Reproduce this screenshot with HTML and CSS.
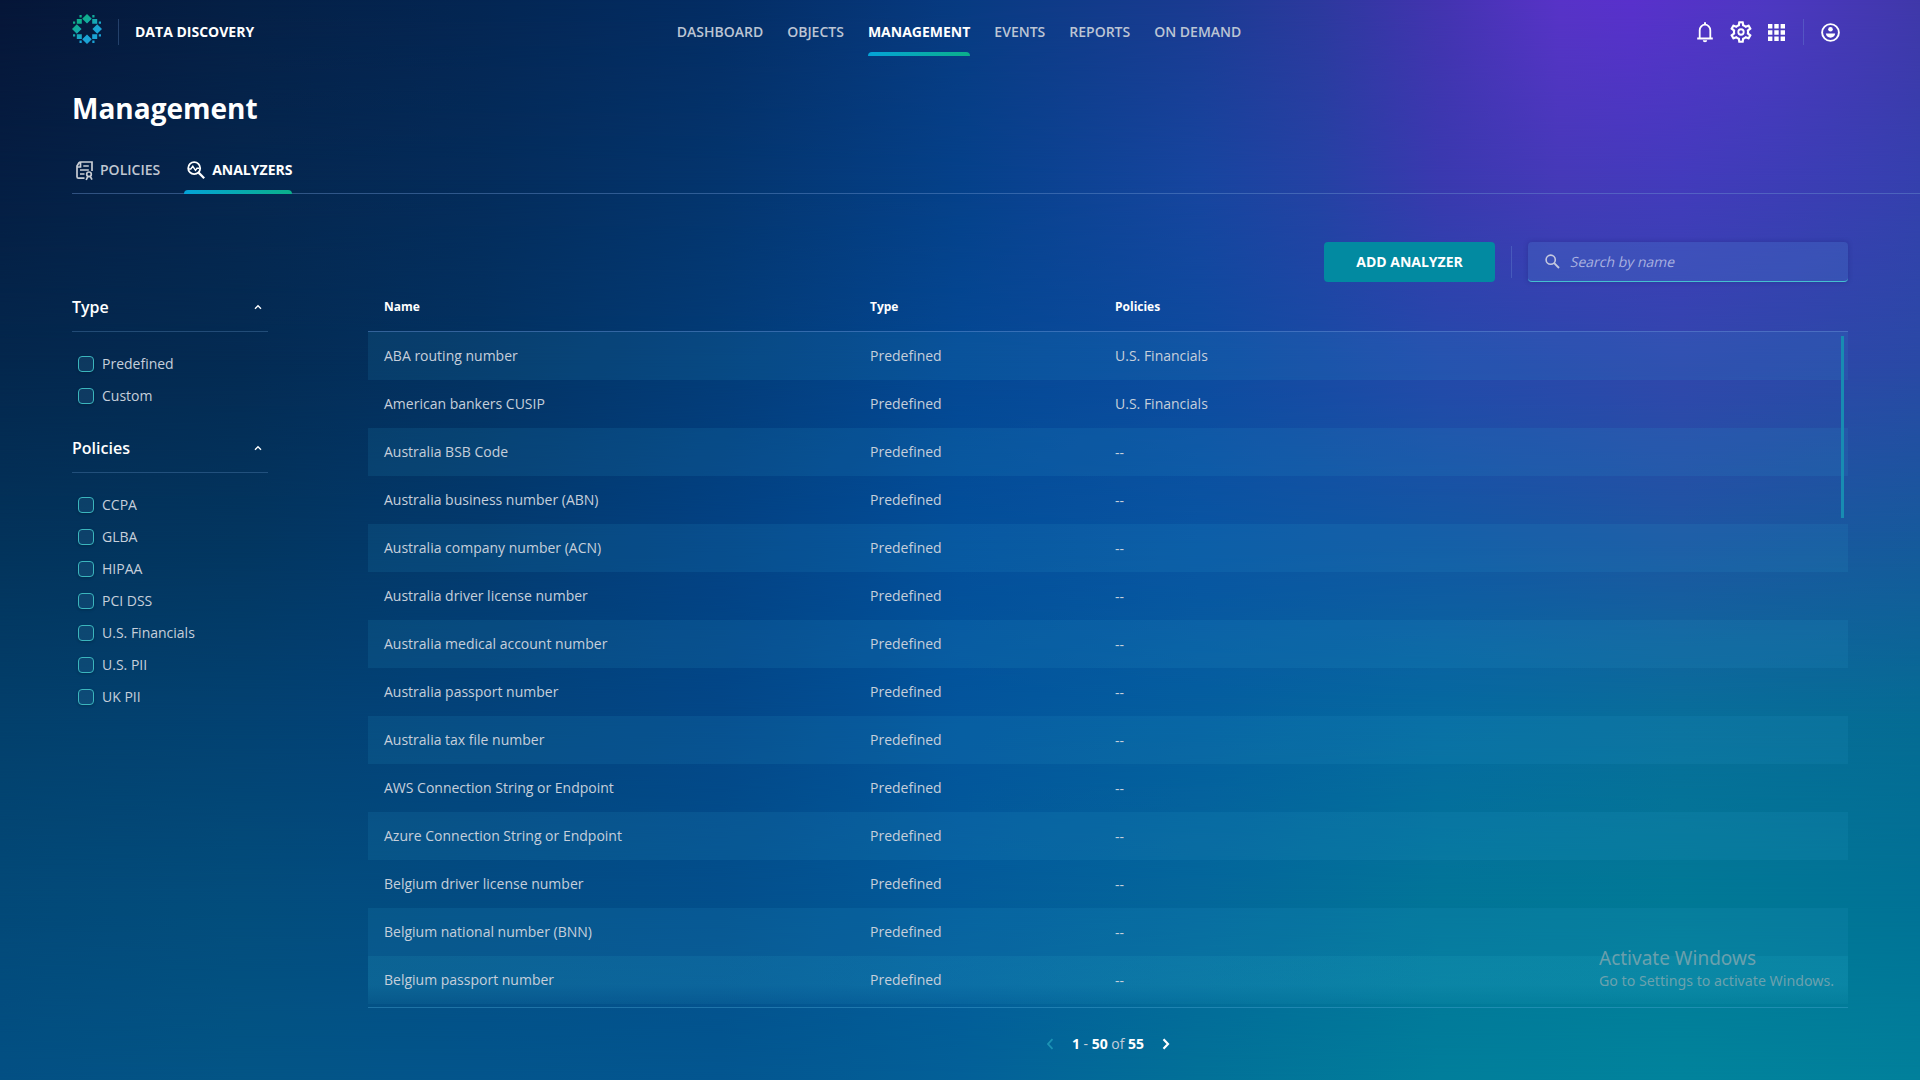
FILE: index.html
```html
<!DOCTYPE html>
<html lang="en">
<head>
<meta charset="utf-8">
<title>Data Discovery - Management</title>
<link rel="stylesheet" href="styles.css">
</head>
<body>
<div class="backdrop">
  <div class="band band-1"></div>
  <div class="band band-2"></div>
  <div class="band band-3"></div>
  <div class="band band-4"></div>
  <div class="band band-5"></div>
  <div class="band band-6"></div>
  <div class="band band-7"></div>
</div>
<div class="app">
  <header class="topbar">
    <div class="brand">
      <svg class="logo" viewBox="0 0 30 30" width="30" height="30">
        <defs>
          <linearGradient id="lg" gradientUnits="userSpaceOnUse" x1="6" y1="4" x2="22" y2="26">
            <stop offset="0.15" stop-color="#0fae8c"/><stop offset="0.75" stop-color="#1ba3d6"/>
          </linearGradient>
        </defs>
        <g fill="url(#lg)">
          <path d="M15 0l4.800 4.800L15 9.600l-4.800-4.800zM15 20.400l4.800 4.800L15 30l-4.800-4.800zM4.800 10.200L9.600 15l-4.800 4.800L0 15zM25.200 10.200L30 15l-4.800 4.800-4.800-4.800z"/>
          <path d="M4.800 5h5v4.800h-5zM20.200 5h5v4.800h-5zM4.800 20.200h5V25h-5zM20.200 20.200h5V25h-5z"/>
          <path d="M7.500 1h2.200v2.400H7.500zM20.300 1h2.200v2.400h-2.200zM1 7.600h2.200v2.200H1zM26.800 7.600H29v2.200h-2.200zM1 20.200h2.200v2.200H1zM26.800 20.200H29v2.200h-2.200zM7.500 26.600h2.200V29H7.500zM20.300 26.600h2.200V29h-2.200z"/>
        </g>
      </svg>
      <span class="vline"></span>
      <span class="product">DATA DISCOVERY</span>
    </div>
    <nav class="menu">
      <a>DASHBOARD</a><a>OBJECTS</a><a class="active">MANAGEMENT</a><a>EVENTS</a><a>REPORTS</a><a>ON DEMAND</a>
    </nav>
    <div class="tools">
      <svg class="bell" viewBox="0 0 24 24" width="24" height="24"><path fill="none" stroke="#fff" stroke-width="1.800" d="M6.700 18.500v-8.200a5.300 5.600 0 0 1 10.600 0v8.200"/><path fill="#fff" d="M4.200 17.600h15.600v1.900H4.200zM11 2.200h2v2.600h-2zM9.800 20.300h4.400a2.200 2 0 0 1-4.400 0z"/></svg>
      <svg class="gear" viewBox="0 0 24 24" width="26" height="26"><path fill="#fff" d="M19.430 12.980c.04-.32.07-.64.07-.98 0-.34-.03-.66-.07-.98l2.110-1.650c.19-.15.24-.42.12-.64l-2-3.460c-.09-.16-.26-.25-.44-.25-.06 0-.12.010-.17.030l-2.490 1c-.52-.4-1.080-.73-1.690-.98l-.38-2.650C14.460 2.180 14.250 2 14 2h-4c-.25 0-.46.18-.49.42l-.38 2.650c-.61.25-1.170.59-1.690.98l-2.490-1c-.06-.02-.12-.03-.18-.03-.17 0-.34.09-.43.25l-2 3.460c-.13.22-.07.49.12.64l2.110 1.650c-.04.32-.07.65-.07.98 0 .33.03.66.07.98l-2.110 1.650c-.19.15-.24.42-.12.64l2 3.460c.09.16.26.25.44.25.06 0 .12-.01.17-.03l2.490-1c.52.4 1.080.73 1.690.98l.38 2.650c.03.24.24.42.49.42h4c.25 0 .46-.18.49-.42l.38-2.650c.61-.25 1.170-.59 1.690-.98l2.490 1c.06.02.12.03.18.03.17 0 .34-.09.43-.25l2-3.460c.12-.22.07-.49-.12-.64l-2.110-1.650zm-1.980-1.710c.04.31.05.52.05.73 0 .21-.02.43-.05.73l-.14 1.130.89.7 1.080.84-.7 1.210-1.270-.51-1.040-.42-.9.68c-.43.32-.84.56-1.250.73l-1.060.43-.16 1.130-.2 1.350h-1.400l-.19-1.350-.16-1.130-1.060-.43c-.43-.18-.83-.41-1.230-.71l-.91-.7-1.060.43-1.270.51-.7-1.210 1.080-.84.89-.7-.14-1.130c-.03-.31-.05-.54-.05-.74s.02-.43.05-.73l.14-1.130-.89-.7-1.080-.84.7-1.210 1.270.51 1.040.42.9-.68c.43-.32.84-.56 1.250-.73l1.060-.43.16-1.130.2-1.350h1.390l.19 1.350.16 1.130 1.060.43c.43.18.83.41 1.230.71l.91.7 1.060-.43 1.270-.51.7 1.210-1.070.85-.89.7.14 1.130z"/><circle cx="12" cy="12" r="2.500" fill="none" stroke="#fff" stroke-width="1.700"/></svg>
      <svg class="apps" viewBox="0 0 17 17" width="17" height="17"><path fill="#fff" d="M0 0h4.400v4.400H0zM6.300 0h4.400v4.400H6.300zM12.600 0H17v4.400h-4.400zM0 6.300h4.400v4.400H0zM6.300 6.300h4.400v4.400H6.300zM12.600 6.300H17v4.400h-4.400zM0 12.600h4.400V17H0zM6.300 12.600h4.400V17H6.300zM12.600 12.600H17V17h-4.400z"/></svg>
      <span class="vline"></span>
      <svg class="account" viewBox="0 0 19 19" width="19" height="19"><circle cx="9.500" cy="9.500" r="8.400" fill="none" stroke="#fff" stroke-width="1.900"/><circle cx="9.500" cy="6.300" r="2.300" fill="#fff"/><path fill="#fff" d="M4.800 10.600h9.400c-.3 2.700-2.300 4.100-4.700 4.100s-4.400-1.400-4.700-4.100z"/></svg>
    </div>
  </header>

  <h1 class="title">Management</h1>

  <div class="tabs">
    <a class="tab">
      <svg viewBox="0 0 18 20" width="18" height="20" fill="none" stroke="#c9cdd4" stroke-width="1.700"><path d="M8.500 17.200H2.500Q1 17.200 1 15.700V5L3 1.800Q3.500 1 4.500 1H16v9M7.300 5h5.500M4 9h8.800M4 13h4.500M1 6h3.500V1.500"/><circle cx="13" cy="13.300" r="2.300"/><path d="M11.800 15.300L10.200 19M14.200 15.300l1.800 3.400"/></svg>
      <span>POLICIES</span>
    </a>
    <a class="tab current">
      <svg viewBox="0 0 18 18" width="18" height="18" fill="none" stroke="#fff"><circle cx="7.200" cy="7.200" r="6" stroke-width="1.800"/><path stroke-width="2.200" d="M11.600 11.600l5.600 5.600"/><path stroke-width="1.400" d="M1.500 8h2.300l2-2.700 2.700 4 1.500-2h2.500"/></svg>
      <span>ANALYZERS</span>
    </a>
  </div>

  <div class="actions">
    <button class="add">ADD ANALYZER</button>
    <span class="vline tall"></span>
    <div class="search">
      <svg viewBox="0 0 15 15" width="15" height="15" fill="none" stroke="#c5c9df"><circle cx="5.700" cy="5.700" r="4.600" stroke-width="1.600"/><path d="M9.200 9.200l4.800 4.800" stroke-width="1.900"/></svg>
      <span>Search by name</span>
    </div>
  </div>

  <main class="content">
    <aside class="filters">
      <section class="group">
        <h2><span>Type</span><svg viewBox="0 0 8 6" width="8" height="6"><path d="M1 4.800l3-3 3 3" fill="none" stroke="#fff" stroke-width="1.400"/></svg></h2>
        <label><i class="box"></i><span>Predefined</span></label>
        <label><i class="box"></i><span>Custom</span></label>
      </section>
      <section class="group">
        <h2><span>Policies</span><svg viewBox="0 0 8 6" width="8" height="6"><path d="M1 4.800l3-3 3 3" fill="none" stroke="#fff" stroke-width="1.400"/></svg></h2>
        <label><i class="box"></i><span>CCPA</span></label>
        <label><i class="box"></i><span>GLBA</span></label>
        <label><i class="box"></i><span>HIPAA</span></label>
        <label><i class="box"></i><span>PCI DSS</span></label>
        <label><i class="box"></i><span>U.S. Financials</span></label>
        <label><i class="box"></i><span>U.S. PII</span></label>
        <label><i class="box"></i><span>UK PII</span></label>
      </section>
    </aside>

    <section class="list">
      <div class="row head"><span>Name</span><span>Type</span><span>Policies</span></div>
      <div class="rows">
        <div class="row"><span>ABA routing number</span><span>Predefined</span><span>U.S. Financials</span></div>
        <div class="row"><span>American bankers CUSIP</span><span>Predefined</span><span>U.S. Financials</span></div>
        <div class="row"><span>Australia BSB Code</span><span>Predefined</span><span class="none">--</span></div>
        <div class="row"><span>Australia business number (ABN)</span><span>Predefined</span><span class="none">--</span></div>
        <div class="row"><span>Australia company number (ACN)</span><span>Predefined</span><span class="none">--</span></div>
        <div class="row"><span>Australia driver license number</span><span>Predefined</span><span class="none">--</span></div>
        <div class="row"><span>Australia medical account number</span><span>Predefined</span><span class="none">--</span></div>
        <div class="row"><span>Australia passport number</span><span>Predefined</span><span class="none">--</span></div>
        <div class="row"><span>Australia tax file number</span><span>Predefined</span><span class="none">--</span></div>
        <div class="row"><span>AWS Connection String or Endpoint</span><span>Predefined</span><span class="none">--</span></div>
        <div class="row"><span>Azure Connection String or Endpoint</span><span>Predefined</span><span class="none">--</span></div>
        <div class="row"><span>Belgium driver license number</span><span>Predefined</span><span class="none">--</span></div>
        <div class="row"><span>Belgium national number (BNN)</span><span>Predefined</span><span class="none">--</span></div>
        <div class="row hover"><span>Belgium passport number</span><span>Predefined</span><span class="none">--</span></div>
        <div class="scrollbar"></div>
      </div>
      <div class="pager">
        <svg viewBox="0 0 8 12" width="8" height="12"><path d="M6.500 1.200L2 6l4.500 4.800" fill="none" stroke="#1c93b4" stroke-width="1.800"/></svg>
        <span><b>1</b> - <b>50</b> of <b>55</b></span>
        <svg viewBox="0 0 8 12" width="8" height="12"><path d="M1.500 1.200L6 6l-4.500 4.800" fill="none" stroke="#fff" stroke-width="2.200"/></svg>
      </div>
    </section>
  </main>
</div>
<div class="watermark"><p class="wm-title">Activate Windows</p><p class="wm-text">Go to Settings to activate Windows.</p></div>
</body>
</html>
```
FILE: styles.css
```css
* { box-sizing: border-box; }

body {
  margin: 0;
  width: 1920px;
  height: 1080px;
  overflow: hidden;
  background: #04305c;
  font-family: "Open Sans", "Noto Sans", sans-serif;
  font-size: 14px;
  color: #c6cfdb;
}

/* Backdrop: horizontal colour bands, each fading into the next one */
.backdrop { position: absolute; inset: 0; }
.band {
  position: absolute;
  inset: 0;
  -webkit-mask-image: linear-gradient(to bottom, transparent var(--from), #000 var(--to));
  mask-image: linear-gradient(to bottom, transparent var(--from), #000 var(--to));
}
.band-1 { --from: -2px; --to: -1px; background: linear-gradient(to right, #061638, #052046, #042653, #042d64, #083b82, #1b3b92 62.5%, #2d399e 68.75%, #4334b0 75%, #5833c8 81.25%, #5931cc 85%, #4e38c2 92%, #4038aa); }
.band-2 { --from: 0px; --to: 180px; background: linear-gradient(to right, #051e43, #05264e, #042c5b, #04356e, #05418a, #17459f 62.5%, #2542a4 68.75%, #3a39af 75%, #453ab8 81.25%, #433bbc 87.5%, #3540ae); }
.band-3 { --from: 180px; --to: 360px; background: linear-gradient(to right, #04274d, #042b53, #033262, #033c78, #044894, #0d4b9f, #2549ab, #3246ad, #2a49a6); }
.band-4 { --from: 360px; --to: 540px; background: linear-gradient(to right, #03335b, #033660, #033a6e, #034284, #034f9a, #0955a2, #1257a2, #1d56a2, #165a9c); }
.band-5 { --from: 540px; --to: 720px; background: linear-gradient(to right, #03406c, #034272, #03437b, #034788, #03559c, #045f9f, #056aa0, #086e9a, #056c94); }
.band-6 { --from: 720px; --to: 900px; background: linear-gradient(to right, #034978, #034d7c, #034c83, #034f8c, #035b9a, #04679b, #027598, #017996, #017296); }
.band-7 { --from: 900px; --to: 1080px; background: linear-gradient(to right, #035084, #035586, #03558c, #035690, #036098, #027198, #017e9b, #01839c, #01809b); }

.app { position: relative; height: 1080px; display: flex; flex-direction: column; }

.vline { width: 1px; height: 26px; background: rgba(120, 160, 220, .28); }
.vline.tall { height: 32px; }

.topbar {
  height: 64px;
  padding: 0 80px 0 72px;
  display: grid;
  grid-template-columns: 1fr auto 1fr;
  align-items: center;
  flex: none;
}
.brand { display: flex; align-items: center; }
.logo { margin: 0 16px 6px 0; }
.product { margin-left: 16px; padding-bottom: 1px; font-weight: 700; color: #fff; }
.menu { display: flex; gap: 24px; height: 64px; margin-left: 6px; }
.menu a { height: 56px; padding-top: 22px; line-height: 20px; font-weight: 600; color: #bcc5d4; border-bottom: 4px solid transparent; }
.menu a.active, .tab.current { color: #fff; font-weight: 700; position: relative; }
.menu a.active::after, .tab.current::after {
  content: "";
  position: absolute;
  left: 0; right: 0; bottom: -4px;
  height: 4px;
  border-radius: 4px 4px 0 0;
  background: linear-gradient(to right, #04a3d8, #0bb08a);
}
.tools { display: flex; align-items: center; justify-content: flex-end; }
.tools .gear { margin-left: 11px; }
.tools .apps { margin-left: 14px; }
.tools .vline { margin: 0 17px 0 18px; }

.title { margin: 25px 0 0 72px; font-size: 28px; line-height: 38px; font-weight: 700; color: #fff; flex: none; }

.tabs {
  height: 47px;
  margin: 20px 0 0 72px;
  padding-left: 4px;
  display: flex;
  gap: 24px;
  border-bottom: 1px solid rgba(110, 150, 210, .42);
  flex: none;
}
.tab { display: flex; align-items: center; gap: 6px; font-weight: 600; color: #c0c7d2; }
.tab svg { position: relative; top: 1px; }
.tab span { padding-bottom: 1px; }
.tab.current { padding-left: 3px; gap: 7px; }
.tab.current svg { top: 0; }
.tab.current::after { bottom: -1px; }

.actions { display: flex; justify-content: flex-end; align-items: center; gap: 16px; margin: 48px 72px 0 0; flex: none; }
.add { width: 171px; height: 40px; padding: 0 0 2px; border: 0; border-radius: 4px; background: #028aa1; color: #fff; font: 700 14px "Open Sans", sans-serif; }
.search {
  width: 320px;
  height: 40px;
  padding-left: 17px;
  display: flex;
  align-items: center;
  gap: 11px;
  border-radius: 4px;
  border-bottom: 1px solid #45c0d0;
  background: rgba(70, 120, 200, .3);
  box-shadow: 0 0 5px rgba(10, 20, 80, .25);
  color: #a9b1e0;
}
.search span { transform: skewX(-13deg); }

.content { display: flex; gap: 100px; padding: 0 72px; }
.filters { width: 196px; }
.group { margin-bottom: 11px; }
.group h2 {
  height: 50px;
  margin: 0 0 16px;
  padding-right: 6px;
  display: flex;
  align-items: center;
  justify-content: space-between;
  border-bottom: 1px solid rgba(100, 150, 200, .32);
  font-size: 16px;
  font-weight: 600;
  color: #fff;
}
.group label { height: 32px; padding-left: 6px; display: flex; align-items: center; gap: 8px; }
.group label span { padding-bottom: 2px; }
.box { width: 16px; height: 16px; border: 1px solid #3bb5bd; border-radius: 4px; background: rgba(50, 120, 160, .22); box-shadow: 0 1px 3px rgba(0, 0, 0, .2); }

.list { width: 1480px; }
.row { display: grid; grid-template-columns: 486px 245px 1fr; height: 48px; align-items: center; padding: 0 0 2px 16px; }
.row.head { height: 50px; padding-bottom: 0; font-size: 12px; font-weight: 700; color: #fff; border-bottom: 1px solid rgba(100, 150, 215, .5); }
.none { padding-top: 3px; }
.rows { position: relative; height: 676px; border-bottom: 1px solid rgba(80, 170, 215, .38); }
.rows .row:nth-child(odd) { background: rgba(45, 165, 205, .13); }
.rows .row.hover { background: linear-gradient(to bottom, rgba(50, 180, 215, .2) 60%, rgba(50, 170, 205, .08)); }
.scrollbar { position: absolute; top: 4px; right: 4px; width: 3px; height: 182px; background: #188cb2; }

.pager { display: flex; align-items: center; justify-content: center; gap: 18px; height: 72px; }
.pager span { padding-bottom: 2px; }
.pager b { color: #fff; }

.watermark { position: absolute; left: 1599px; top: 944px; font-family: "Noto Sans", sans-serif; color: rgba(175, 180, 180, .6); white-space: nowrap; }
.watermark p { margin: 0; }
.wm-title { font-size: 19px; line-height: 28px; }
.wm-text { font-size: 14.200px; line-height: 18px; }
```
